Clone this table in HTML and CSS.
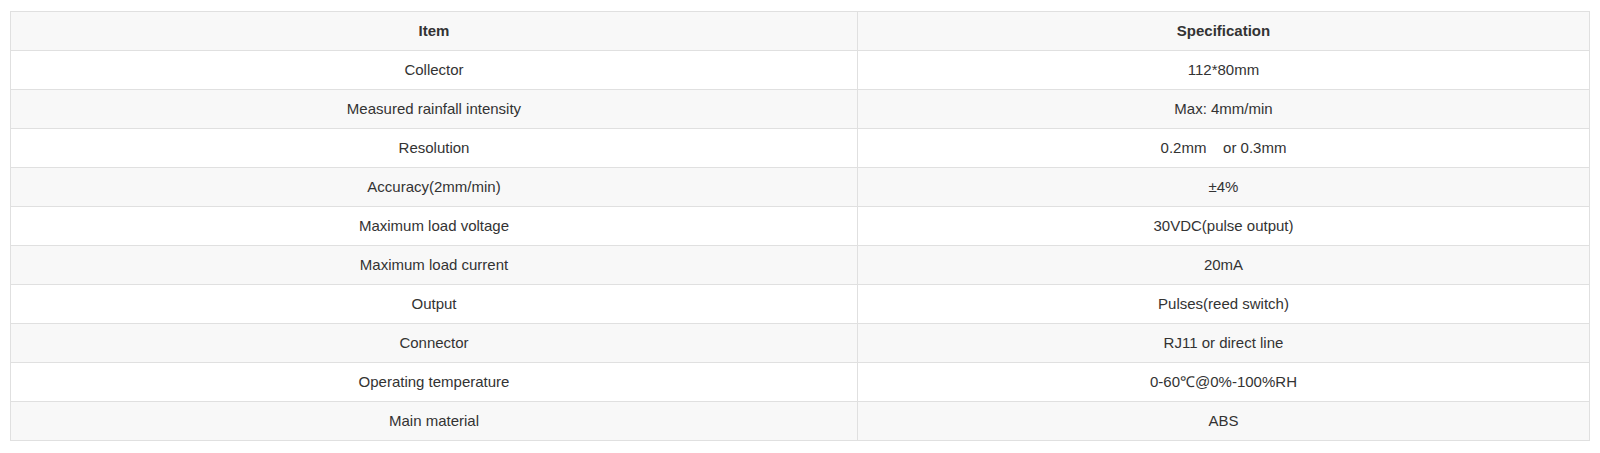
FILE: index.html
```html
<!DOCTYPE html>
<html>
<head>
<meta charset="utf-8">
<link rel="stylesheet" href="styles.css">
</head>
<body>
<div class="wrap">
<table class="spec">
<colgroup><col class="c1"><col class="c2"></colgroup>
<thead>
<tr><th>Item</th><th>Specification</th></tr>
</thead>
<tbody>
<tr><td>Collector</td><td>112*80mm</td></tr>
<tr><td>Measured rainfall intensity</td><td>Max: 4mm/min</td></tr>
<tr><td>Resolution</td><td>0.2mm&nbsp;&nbsp;&nbsp; or 0.3mm</td></tr>
<tr><td>Accuracy(2mm/min)</td><td>±4%</td></tr>
<tr><td>Maximum load voltage</td><td>30VDC(pulse output)</td></tr>
<tr><td>Maximum load current</td><td>20mA</td></tr>
<tr><td>Output</td><td>Pulses(reed switch)</td></tr>
<tr><td>Connector</td><td>RJ11 or direct line</td></tr>
<tr><td>Operating temperature</td><td>0-60℃@0%-100%RH</td></tr>
<tr><td>Main material</td><td>ABS</td></tr>
</tbody>
</table>
</div>
</body>
</html>
```
FILE: styles.css
```css
html, body {
  margin: 0;
  padding: 0;
  background: #fff;
}
.wrap {
  padding: 11px 10px;
}
.spec {
  width: 1580px;
  border-collapse: collapse;
  table-layout: fixed;
  font-family: "Liberation Sans", Arial, sans-serif;
  font-size: 15px;
  color: #333;
}
.c1 { width: 847px; }
.spec th, .spec td {
  border: 1px solid #e0e0e0;
  padding: 8px;
  height: 22px;
  line-height: 22px;
  text-align: center;
  vertical-align: middle;
}
.spec th {
  font-weight: bold;
  background: #f8f8f8;
}
.spec tbody tr:nth-child(even) td {
  background: #f8f8f8;
}
```
